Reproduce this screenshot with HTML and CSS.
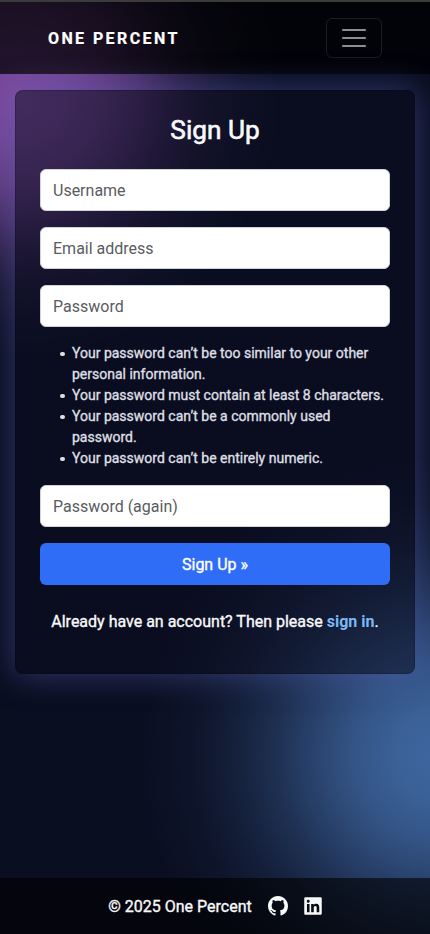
FILE: index.html
```html
<!DOCTYPE html>
<html lang="en">
<head>
<meta charset="utf-8">
<meta name="viewport" content="width=device-width, initial-scale=1">
<title>Sign Up</title>
<link rel="stylesheet" href="styles.css">
</head>
<body>
<header class="navbar">
  <a class="brand" href="#">ONE PERCENT</a>
  <button class="toggler" type="button" aria-label="Toggle navigation">
    <svg width="30" height="30" viewBox="0 0 30 30"><path stroke="currentColor" stroke-width="2" d="M3.200 7h23.600M3.200 15h23.600M3.200 23h23.600"/></svg>
  </button>
</header>
<main class="content">
  <section class="card">
    <h1 class="title">Sign Up</h1>
    <form class="form">
      <input class="field" type="text" placeholder="Username">
      <input class="field" type="email" placeholder="Email address">
      <input class="field" type="password" placeholder="Password">
      <ul class="hints">
        <li>Your password can’t be too similar to your other personal information.</li>
        <li>Your password must contain at least 8 characters.</li>
        <li>Your password can’t be a commonly used password.</li>
        <li>Your password can’t be entirely numeric.</li>
      </ul>
      <input class="field" type="password" placeholder="Password (again)">
      <button class="submit" type="button">Sign Up »</button>
    </form>
    <p class="signin">Already have an account? Then please <a href="#">sign in</a>.</p>
  </section>
</main>
<footer class="footer">
  <span class="copyright">© 2025 One Percent</span>
  <a class="social" href="#" aria-label="GitHub"><svg width="20" height="20" viewBox="0 0 16 16" fill="currentColor"><path d="M8 0C3.58 0 0 3.58 0 8c0 3.54 2.29 6.53 5.47 7.59.4.07.55-.17.55-.38 0-.19-.01-.82-.01-1.49-2.01.37-2.53-.49-2.69-.94-.09-.23-.48-.94-.82-1.13-.28-.15-.68-.52-.01-.53.63-.01 1.08.58 1.23.82.72 1.21 1.87.87 2.33.66.07-.52.28-.87.51-1.07-1.78-.2-3.64-.89-3.64-3.95 0-.87.31-1.59.82-2.15-.08-.2-.36-1.02.08-2.12 0 0 .67-.21 2.2.82.64-.18 1.32-.27 2-.27s1.36.09 2 .27c1.53-1.04 2.2-.82 2.2-.82.44 1.1.16 1.92.08 2.12.51.56.82 1.27.82 2.15 0 3.07-1.87 3.75-3.65 3.95.29.25.54.73.54 1.48 0 1.07-.01 1.93-.01 2.2 0 .21.15.46.55.38A8.01 8.01 0 0 0 16 8c0-4.42-3.58-8-8-8"/></svg></a>
  <a class="social" href="#" aria-label="LinkedIn"><svg width="18" height="20" viewBox="0 0 448 512" fill="currentColor"><path d="M416 32H31.9C14.3 32 0 46.500 0 64.300v383.400C0 465.500 14.300 480 31.900 480H416c17.600 0 32-14.500 32-32.300V64.300c0-17.800-14.400-32.300-32-32.300M135.400 416H69V202.200h66.500V416zm-33.200-243c-21.300 0-38.500-17.300-38.500-38.500S80.900 96 102.200 96c21.200 0 38.500 17.300 38.500 38.500 0 21.300-17.200 38.500-38.500 38.500m282.100 243h-66.400V312c0-24.800-.5-56.700-34.500-56.700-34.600 0-39.900 27-39.900 54.900V416h-66.400V202.200h63.700v29.200h.9c8.900-16.800 30.600-34.500 62.900-34.500 67.200 0 79.700 44.300 79.700 101.900z"/></svg></a>
</footer>
</body>
</html>
```
FILE: styles.css
```css
* { box-sizing: border-box; }
body {
  margin: 0;
  min-height: 934px;
  display: flex;
  flex-direction: column;
  border-top: 2px solid #3b3b3b;
  color: #f8f9fa;
  font: 400 16px/1.75 Roboto, sans-serif;
  background:
    radial-gradient(circle at 20px 96px, #7d4b9f 0, #7b499df0 45px, #7b489bcc 85px, #7b489b94 120px, #7b489b56 155px, #7b489b28 190px, #7b489b0e 225px, #7b489b00 260px),
    radial-gradient(circle at 440px 755px, #3e669f 0, #3e669ff0 45px, #3e669fc8 90px, #3e669f94 130px, #3e669f5c 170px, #3e669f30 210px, #3e669f12 250px, #3e669f00 300px),
    #0a0e21;
}
.navbar {
  height: 72px;
  padding: 0 48px;
  display: flex;
  align-items: center;
  justify-content: space-between;
  background: rgba(0, 0, 0, .72);
}
.brand {
  padding-top: 2px;
  color: #fff;
  font-weight: 700;
  letter-spacing: 2.4px;
  text-decoration: none;
  -webkit-text-stroke: .2px;
}
.toggler {
  width: 56px;
  height: 40px;
  padding: 0;
  display: flex;
  align-items: center;
  justify-content: center;
  color: rgba(255, 255, 255, .55);
  background: none;
  border: 1px solid rgba(255, 255, 255, .1);
  border-radius: 6px;
}
.content { flex: 1; padding: 16px 15px; }
.card {
  height: 584px;
  padding: 23px 24px;
  border: 1px solid rgba(0, 0, 0, .18);
  border-radius: 8px;
  background: rgba(11, 13, 32, .52);
  box-shadow: 0 0 32px rgba(88, 98, 185, .52);
}
.title {
  margin: 0 0 23px;
  text-align: center;
  font-size: 26.2px;
  line-height: 32px;
  font-weight: 400;
  -webkit-text-stroke: .6px;
}
.form { display: flex; flex-direction: column; gap: 16px; }
.field {
  height: 42px;
  width: 100%;
  padding: 6px 12px;
  font: inherit;
  background: #fff;
  border: 1px solid #ced4da;
  border-radius: 6px;
}
.field::placeholder { color: #595c5f; opacity: 1; }
.hints {
  margin: 0;
  padding-left: 32px;
  list-style: none;
  font-size: 14px;
  line-height: 21px;
  color: #dedfe2;
  -webkit-text-stroke: .35px;
}
.hints li { position: relative; }
.hints li::before {
  content: "";
  position: absolute;
  left: -12px;
  top: 8.5px;
  width: 4.8px;
  height: 4.8px;
  border-radius: 50%;
  background: currentColor;
}
.submit {
  height: 42px;
  padding: 2px 0 0;
  border: 0;
  border-radius: 6px;
  color: #fff;
  background: #306df6;
  font: inherit;
  -webkit-text-stroke: .35px;
}
.signin {
  margin: 23px 0 0;
  text-align: center;
  white-space: nowrap;
  -webkit-text-stroke: .35px;
}
.signin a { color: #7bb8f5; font-weight: 700; text-decoration: none; -webkit-text-stroke: 0; }
.footer {
  height: 56px;
  display: flex;
  align-items: center;
  justify-content: center;
  gap: 16px;
  background: rgba(0, 0, 0, .6);
}
.copyright { padding-top: 2px; -webkit-text-stroke: .35px; }
.social { display: flex; color: #f8f9fa; }
```
